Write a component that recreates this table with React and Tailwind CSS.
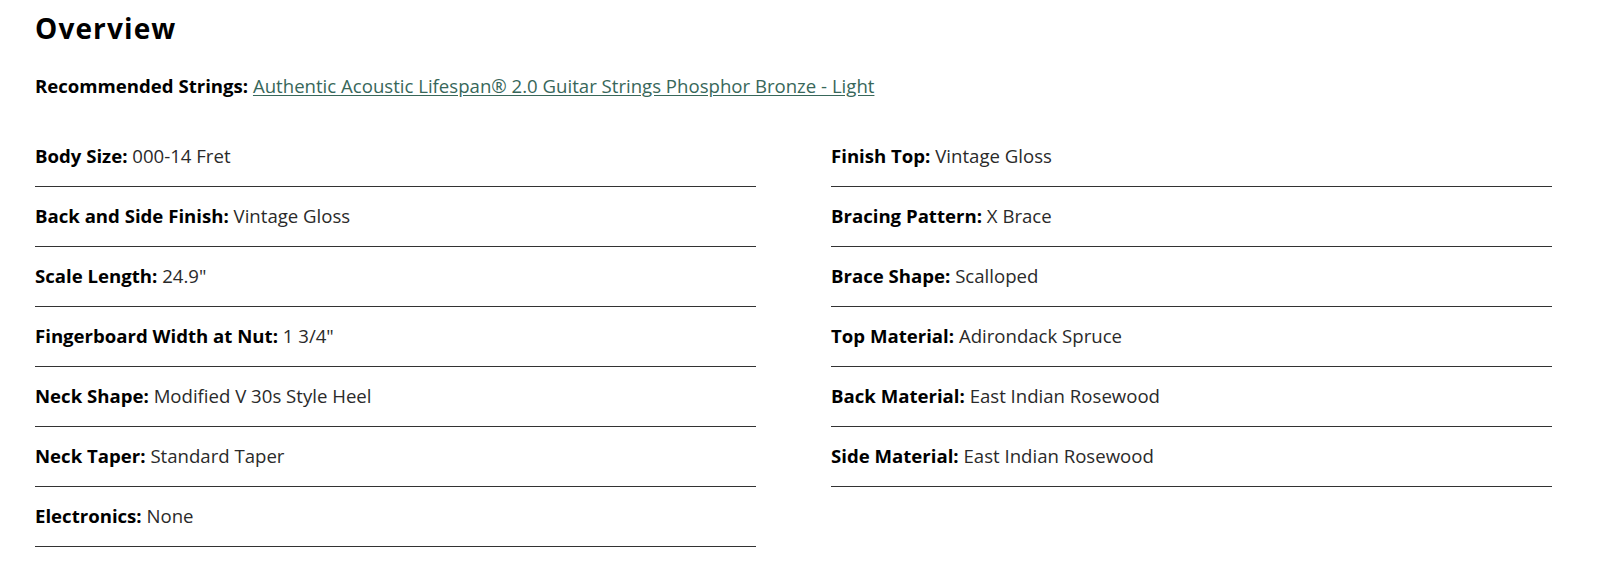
const left = [
  ['Body Size:', '000-14 Fret'],
  ['Back and Side Finish:', 'Vintage Gloss'],
  ['Scale Length:', '24.9"'],
  ['Fingerboard Width at Nut:', '1 3/4"'],
  ['Neck Shape:', 'Modified V 30s Style Heel'],
  ['Neck Taper:', 'Standard Taper'],
  ['Electronics:', 'None'],
];

const right = [
  ['Finish Top:', 'Vintage Gloss'],
  ['Bracing Pattern:', 'X Brace'],
  ['Brace Shape:', 'Scalloped'],
  ['Top Material:', 'Adirondack Spruce'],
  ['Back Material:', 'East Indian Rosewood'],
  ['Side Material:', 'East Indian Rosewood'],
];

function SpecRow({ label, value }) {
  return (
    <div className="pt-[16px] pb-[17px] border-b border-[#333] text-[18.6px] leading-[26px]">
      <span className="font-bold text-black">{label}</span>{' '}
      <span className="text-[#2a2a2a]">{value}</span>
    </div>
  );
}

export default function App() {
  return (
    <div className="bg-white min-h-[580px] pl-[35px] pr-[48px] pt-[10px] font-['Open_Sans',sans-serif]">
      <h2 className="text-[28px] leading-9 font-bold tracking-[0.04em] text-black">Overview</h2>
      <p className="mt-[27px] text-[18.6px] leading-[26px]">
        <span className="font-bold text-black">Recommended Strings:</span>{' '}
        <a href="#" className="text-[#38675a] underline underline-offset-2">
          Authentic Acoustic Lifespan® 2.0 Guitar Strings Phosphor Bronze - Light
        </a>
      </p>
      <div className="mt-[28px] grid grid-cols-2 gap-x-[75px]">
        <div className="flex flex-col">
          {left.map(([l, v], i) => (
            <SpecRow key={i} label={l} value={v} />
          ))}
        </div>
        <div className="flex flex-col">
          {right.map(([l, v], i) => (
            <SpecRow key={i} label={l} value={v} />
          ))}
        </div>
      </div>
    </div>
  );
}
